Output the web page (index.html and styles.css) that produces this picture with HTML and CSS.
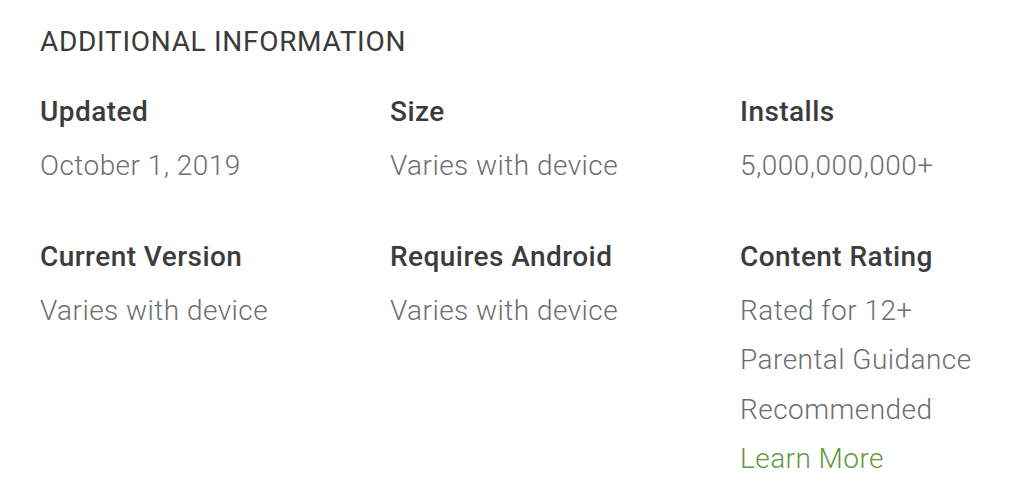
FILE: index.html
```html
<!DOCTYPE html>
<html>
<head>
<meta charset="utf-8">
<link rel="stylesheet" href="styles.css">
</head>
<body>
<section class="info">
  <h2 class="info-title">ADDITIONAL INFORMATION</h2>
  <div class="info-grid">
    <div class="item">
      <div class="label">Updated</div>
      <div class="value">October 1, 2019</div>
    </div>
    <div class="item">
      <div class="label">Size</div>
      <div class="value">Varies with device</div>
    </div>
    <div class="item">
      <div class="label">Installs</div>
      <div class="value">5,000,000,000+</div>
    </div>
    <div class="item">
      <div class="label">Current Version</div>
      <div class="value">Varies with device</div>
    </div>
    <div class="item">
      <div class="label">Requires Android</div>
      <div class="value">Varies with device</div>
    </div>
    <div class="item">
      <div class="label">Content Rating</div>
      <div class="value">Rated for 12+</div>
      <div class="value value-wrap">Parental Guidance Recommended</div>
      <div class="value"><a class="link" href="#">Learn More</a></div>
    </div>
  </div>
</section>
</body>
</html>
```

FILE: styles.css
```css
html, body {
  margin: 0;
  padding: 0;
  background: #ffffff;
}
body {
  font-family: Roboto, "Noto Sans", "Liberation Sans", sans-serif;
  font-size: 28px;
  color: #333333;
}
.info {
  padding: 17px 0 0 40px;
}
.info-title {
  margin: 0;
  font-size: 28px;
  font-weight: 400;
  line-height: 50px;
  letter-spacing: 0.7px;
  color: #3a3a3a;
}
.info-grid {
  margin-top: 20px;
  display: grid;
  grid-template-columns: 350px 350px 260px;
  row-gap: 41px;
}
.label {
  font-weight: 500;
  line-height: 50px;
  margin-bottom: 4px;
  color: #3c3c3c;
  letter-spacing: 0.45px;
}
.value {
  line-height: 49.6px;
  color: #6e6e6e;
  font-weight: 300;
  letter-spacing: 0.45px;
}
.value-wrap {
  width: 245px;
}
.link {
  color: #5f9b3c;
  text-decoration: none;
}
```
